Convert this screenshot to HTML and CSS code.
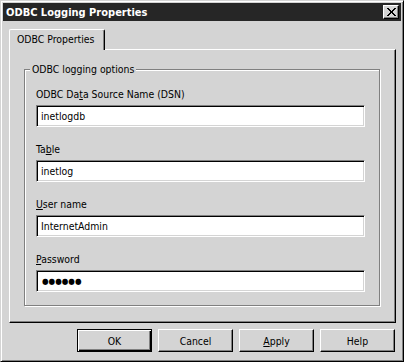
FILE: index.html
```html
<!DOCTYPE html>
<html>
<head>
<meta charset="utf-8">
<title>ODBC Logging Properties</title>
<link rel="stylesheet" href="styles.css">
</head>
<body>
<div class="window">
  <div class="titlebar">
    <span class="title">ODBC Logging Properties</span>
    <button class="close" aria-label="Close"><svg width="9" height="8" viewBox="0 0 9 8" shape-rendering="crispEdges"><path d="M0 0h2v1H0zM7 0h2v1H7zM1 1h2v1H1zM6 1h2v1H6zM2 2h2v1H2zM5 2h2v1H5zM3 3h3v2H3zM2 5h2v1H2zM5 5h2v1H5zM1 6h2v1H1zM6 6h2v1H6zM0 7h2v1H0zM7 7h2v1H7z" fill="#000"/></svg></button>
  </div>
  <div class="client">
    <div class="tabs"><div class="tab">ODBC Properties</div></div>
    <div class="panel">
      <div class="group">
        <span class="legend">ODBC logging options</span>
        <label class="label">ODBC Da<u>t</u>a Source Name (DSN)</label>
        <input class="field" type="text" value="inetlogdb">
        <label class="label">Ta<u>b</u>le</label>
        <input class="field" type="text" value="inetlog">
        <label class="label"><u>U</u>ser name</label>
        <input class="field" type="text" value="InternetAdmin">
        <label class="label"><u>P</u>assword</label>
        <input class="field pw" type="text" value="●●●●●●">
      </div>
    </div>
    <div class="buttons">
      <button class="btn default">OK</button>
      <button class="btn">Cancel</button>
      <button class="btn"><u>A</u>pply</button>
      <button class="btn">Help</button>
    </div>
  </div>
</div>
</body>
</html>
```
FILE: styles.css
```css
* { box-sizing: border-box; }
html, body { margin: 0; background: #d4d4d4; }
body { font-family: "DejaVu Sans Condensed", "DejaVu Sans", sans-serif; font-size: 10.4px; color: #000; }

.window {
  width: 404px; height: 362px;
  border: 1px solid; border-color: #d4d4d4 #000 #000 #d4d4d4;
  box-shadow: inset 1px 1px #fff, inset -1px -1px #808080;
  padding: 2px;
  display: flex; flex-direction: column;
}
.titlebar {
  flex: none; height: 18px; background: #262626;
  display: flex; align-items: center; justify-content: space-between;
  padding: 0 2px 0 3px;
}
.title { color: #fff; font-weight: bold; font-size: 11px; }
.close {
  width: 16px; height: 14px; padding: 0; margin: 0;
  border: 1px solid; border-color: #fff #000 #000 #fff;
  box-shadow: inset -1px -1px #808080;
  background: #d4d4d4;
  display: flex; align-items: center; justify-content: center;
}

.client { padding: 8px 5px 0 6px; }
.tabs { display: flex; height: 20px; }
.tab {
  position: relative; z-index: 1;
  width: 96px; height: 21px;
  border-top: 1px solid #fff; border-left: 1px solid #fff; border-right: 1px solid #000;
  border-radius: 2px 2px 0 0;
  box-shadow: inset -1px 0 #808080;
  background: #d4d4d4;
  padding: 2px 0 0 7px; line-height: 14px;
}
.panel {
  height: 274px;
  border: 1px solid; border-color: #fff #000 #000 #fff;
  box-shadow: inset -1px -1px #808080;
  padding: 19px 0 0 14px;
}
.group {
  position: relative;
  width: 356px; height: 237px;
  border: 1px solid #808080;
  box-shadow: 1px 1px 0 #fff, inset 1px 1px 0 #fff;
  padding: 17px 0 0 11px;
}
.legend {
  position: absolute; top: -8px; left: 5px;
  padding: 0 2px; background: #d4d4d4; line-height: 14px;
}
.label { display: block; height: 14px; line-height: 14px; margin-bottom: 4px; }
.field {
  display: block; width: 329px; height: 22px; margin: 0 0 15px 0;
  border: 1px solid; border-color: #808080 #fff #fff #808080;
  box-shadow: inset 1px 1px #000, inset -1px -1px #d4d4d4;
  padding: 0 0 0 4px; background: #fff;
  font: inherit; color: #000; outline: none;
}
.field.pw { margin-bottom: 0; font-size: 8.4px; padding-left: 5px; }

.buttons { display: flex; justify-content: flex-end; gap: 6px; margin-top: 6px; padding-right: 1px; }
.btn {
  width: 75px; height: 23px; padding: 0; margin: 0;
  border: 1px solid; border-color: #fff #000 #000 #fff;
  box-shadow: inset -1px -1px #808080;
  background: #d4d4d4; font: inherit; color: #000;
}
.btn.default {
  border-color: #000;
  box-shadow: inset 1px 1px #fff, inset -1px -1px #000, inset -2px -2px #808080;
}
```
